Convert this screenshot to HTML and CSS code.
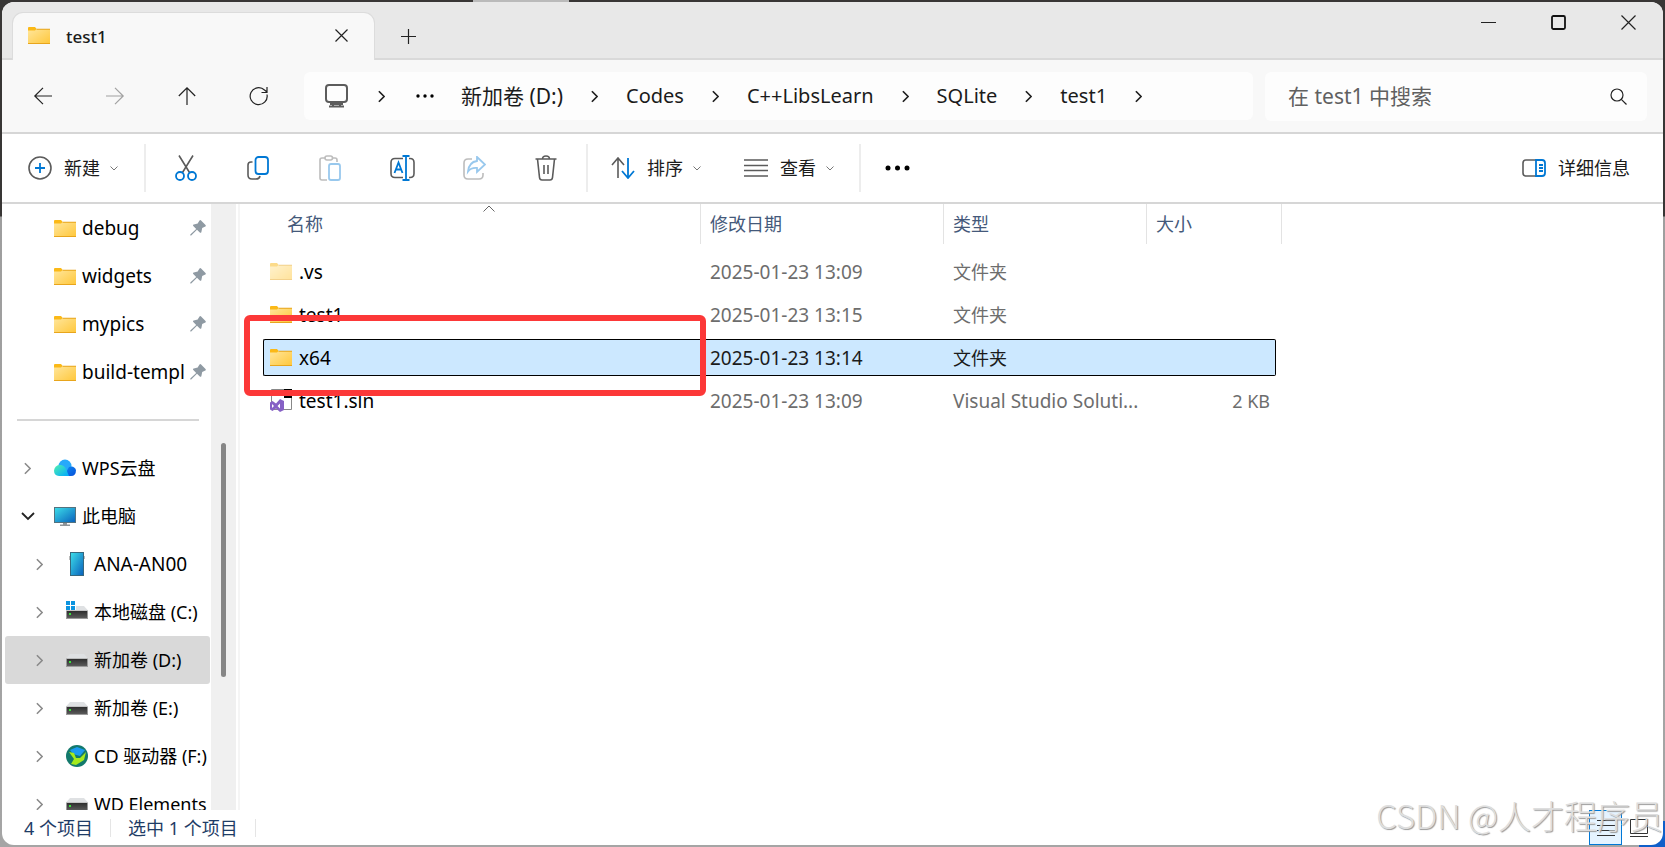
FILE: index.html
```html
<!DOCTYPE html>
<html lang="zh-CN">
<head>
<meta charset="utf-8">
<title>test1</title>
<link rel="stylesheet" href="styles.css">
</head>
<body>
<svg class="defs" aria-hidden="true">
  <defs>
    <linearGradient id="gold" x1="0" y1="0" x2="1" y2="1"><stop offset="0" stop-color="#ffe69c"/><stop offset="1" stop-color="#ffc73a"/></linearGradient>
    <linearGradient id="screen" x1="0" y1="0" x2="1" y2="1"><stop offset="0" stop-color="#3bdbe8"/><stop offset="1" stop-color="#0a63bd"/></linearGradient>
    <linearGradient id="cloudA" x1="0" y1="0" x2="1" y2="1"><stop offset="0" stop-color="#4ff0b0"/><stop offset="1" stop-color="#00a8ff"/></linearGradient>
    <linearGradient id="cloudB" x1="0" y1="0" x2="1" y2="1"><stop offset="0" stop-color="#0a8bf5"/><stop offset="1" stop-color="#0a50d8"/></linearGradient>
    <linearGradient id="drivebody" x1="0" y1="0" x2="0" y2="1"><stop offset="0" stop-color="#2e2e2e"/><stop offset="1" stop-color="#5a5a5a"/></linearGradient>
    <symbol id="folder" viewBox="0 0 22 17"><path fill="#fbb917" d="M0 1q0-1 1-1h6l1.500 1.700L8 4H0z"/><path fill="url(#gold)" d="M0 3.500h7L8.500 2H22v15H0z"/><path fill="#e8a51c" d="M8.500 1.700H22v1H8.500zM0 16h22v1H0z"/></symbol>
    <symbol id="drive" viewBox="0 0 22 13"><path fill="#dfe1e3" d="M4 0h14l4 4.500H0z"/><path fill="#9a9a9a" d="M0 4.500h22V13H0z"/><path fill="url(#drivebody)" d="M1 5h20v7H1z"/><path fill="#37e23a" d="M3 7h2v2H3z"/></symbol>
    <symbol id="pin" viewBox="0 0 16 16"><path fill="#8f9aa3" d="M9.500.5q.8-.8 1.600 0l4.400 4.400q.8.9-.2 1.500l-3.100 1.500-.8 4q-.5 1.500-1.600.5L7 9.700 1.200 15.500H.3v-1L6.200 8.900 3.300 6q-.9-1 .5-1.500l3.900-.9z"/></symbol>
    <symbol id="right" viewBox="0 0 8 14"><path d="M1 1l6 6-6 6"/></symbol>
    <symbol id="down" viewBox="0 0 8 5"><path d="M.5.500l3.500 3.500L7.500.5"/></symbol>
  </defs>
</svg>
<div class="window">
  <header class="titlebar">
    <div class="tab">
      <svg class="folder"><use href="#folder"/></svg>
      <span class="tab-name">test1</span>
      <button class="plain" aria-label="关闭标签页"><svg class="ln" width="13" height="13" viewBox="0 0 13 13"><path d="M.5.500l12 12M12.500.5l-12 12"/></svg></button>
    </div>
    <button class="plain new-tab" aria-label="新建标签页"><svg class="ln" width="15" height="15" viewBox="0 0 15 15"><path d="M7.500 0v15M0 7.500h15"/></svg></button>
    <div class="caption">
      <button class="plain" aria-label="最小化"><svg class="ln" width="15" height="15" viewBox="0 0 15 15"><path d="M0 7.500h15"/></svg></button>
      <button class="plain" aria-label="最大化"><svg class="ln heavy" width="15" height="15" viewBox="0 0 15 15"><rect x="1" y="1" width="13" height="13" rx="1.500"/></svg></button>
      <button class="plain" aria-label="关闭"><svg class="ln" width="15" height="15" viewBox="0 0 15 15"><path d="M.5.500l14 14M14.500.5l-14 14"/></svg></button>
    </div>
  </header>

  <nav class="navbar">
    <div class="nav-buttons">
      <button class="plain" aria-label="后退"><svg class="ln" width="18" height="18" viewBox="0 0 18 18"><path d="M18 9H1M9 .8L.8 9 9 17.200"/></svg></button>
      <button class="plain" aria-label="前进" disabled><svg class="ln" width="18" height="18" viewBox="0 0 18 18"><path d="M0 9h17M9 .8L17.200 9 9 17.200"/></svg></button>
      <button class="plain" aria-label="向上"><svg class="ln" width="18" height="18" viewBox="0 0 18 18"><path d="M9 18V1M.8 9L9 .8 17.200 9"/></svg></button>
      <button class="plain" aria-label="刷新"><svg class="ln" width="20" height="20" viewBox="0 0 20 20"><path d="M18 8.500A8.500 8.500 0 1 1 15.500 4L18 6M18 1v5.500h-5.500"/></svg></button>
    </div>
    <div class="address">
      <svg class="pc" width="23" height="24" viewBox="0 0 23 24"><rect x="1" y="1" width="21" height="17" rx="3"/><path d="M8 18v4M15 18v4M4 22.500h15M5 20h13"/></svg>
      <svg class="ln sep"><use href="#right"/></svg>
      <button class="plain" aria-label="更多路径"><svg width="18" height="4" viewBox="0 0 18 4"><circle cx="2" cy="2" r="1.700"/><circle cx="9" cy="2" r="1.700"/><circle cx="16" cy="2" r="1.700"/></svg></button>
      <a class="crumb cjk" href="#d">新加卷 (D:)</a><svg class="ln sep"><use href="#right"/></svg>
      <a class="crumb" href="#codes">Codes</a><svg class="ln sep"><use href="#right"/></svg>
      <a class="crumb" href="#libs">C++LibsLearn</a><svg class="ln sep"><use href="#right"/></svg>
      <a class="crumb" href="#sqlite">SQLite</a><svg class="ln sep"><use href="#right"/></svg>
      <a class="crumb" href="#test1">test1</a><svg class="ln sep"><use href="#right"/></svg>
    </div>
    <div class="search">
      <input type="text" aria-label="搜索" placeholder="在 test1 中搜索">
      <svg class="ln" width="17" height="17" viewBox="0 0 17 17"><circle cx="7" cy="7" r="6"/><path d="M11.300 11.300L16.500 16.500"/></svg>
    </div>
  </nav>

  <div class="toolbar">
    <button class="cmd cmd-new"><svg class="ic" width="24" height="24" viewBox="0 0 24 24"><circle cx="12" cy="12" r="11"/><path class="blue" d="M12 7v10M7 12h10"/></svg><span>新建</span><svg class="ln caret"><use href="#down"/></svg></button>
    <span class="rule"></span>
    <div class="icons">
      <button class="plain" aria-label="剪切"><svg class="ic" width="22" height="26" viewBox="0 0 22 26"><path d="M4 .5l10.500 17M18 .5L7.500 17.500"/><circle class="blue" cx="5" cy="21" r="4"/><circle class="blue" cx="17" cy="21" r="4"/></svg></button>
      <button class="plain" aria-label="复制"><svg class="ic" width="22" height="24" viewBox="0 0 22 24"><path d="M5.500 6H4Q1 6 1 9v10q0 4 4 4h4q3.500 0 4-3"/><rect class="blue" x="8.500" y="1" width="12.500" height="17" rx="3"/></svg></button>
      <button class="plain" aria-label="粘贴" disabled><svg class="ic" width="22" height="26" viewBox="0 0 22 26"><path d="M8 25H3q-2 0-2-2V5q0-2 2-2h3M13 3h3q2 0 2 2v2"/><rect x="6" y="1" width="7.500" height="4" rx="2"/><rect class="blue" x="10" y="9" width="11" height="16" rx="2"/></svg></button>
      <button class="plain" aria-label="重命名"><svg class="ic" width="25" height="26" viewBox="0 0 25 26"><path d="M13 22.500H5q-4 0-4-4v-11q0-4 4-4h8M19 3.500h1q4 0 4 4v11q0 4-4 4h-1"/><path class="blue" d="M16 1v24M12.500 1h7M12.500 25h7M4.500 18L8.500 7.500 12.500 18M6 14.500h5"/></svg></button>
      <button class="plain" aria-label="共享" disabled><svg class="ic" width="23" height="24" viewBox="0 0 23 24"><path d="M9 3H5Q1 3 1 7v12q0 4 4 4h11q4 0 4-4v-2"/><path class="blue" d="M14 1l8 7.500-8 7.500v-4q-6-.5-9 3.500 1-9.500 9-10.500z"/></svg></button>
      <button class="plain" aria-label="删除"><svg class="ic" width="22" height="26" viewBox="0 0 22 26"><path d="M.5 4h21M7.500 4q0-3 3.500-3t3.500 3M2.500 4L4.500 22.500q.3 2.500 2.500 2.500h8q2.200 0 2.500-2.500L19.500 4M9 10v9M13 10v9"/></svg></button>
    </div>
    <span class="rule"></span>
    <button class="cmd cmd-sort"><svg class="ic" width="24" height="22" viewBox="0 0 24 22"><path d="M7 21V1M1 8l6-7 6 7"/><path class="blue" d="M17 1v20M11 14l6 7 6-7"/></svg><span>排序</span><svg class="ln caret"><use href="#down"/></svg></button>
    <button class="cmd cmd-view"><svg class="ic" width="24" height="18" viewBox="0 0 24 18"><path d="M0 1h24M0 6.500h24M0 11.500h24M0 17h24"/></svg><span>查看</span><svg class="ln caret"><use href="#down"/></svg></button>
    <span class="rule"></span>
    <button class="plain more" aria-label="查看更多"><svg width="25" height="6" viewBox="0 0 25 6"><circle cx="3" cy="3" r="2.500"/><circle cx="12.500" cy="3" r="2.500"/><circle cx="22" cy="3" r="2.500"/></svg></button>
    <button class="cmd details"><svg class="ic" width="24" height="18" viewBox="0 0 24 18"><path d="M14 1H4Q1 1 1 4v10q0 3 3 3h10"/><path class="blue" d="M14 1h6q3 0 3 3v10q0 3-3 3h-6zM17 6h4M17 9h4M17 12h4"/></svg><span>详细信息</span></button>
  </div>

  <main class="content">
    <aside class="sidebar">
      <ul class="tree">
        <li class="node pinned"><svg class="folder"><use href="#folder"/></svg><span class="latin">debug</span><svg class="pin"><use href="#pin"/></svg></li>
        <li class="node pinned"><svg class="folder"><use href="#folder"/></svg><span class="latin">widgets</span><svg class="pin"><use href="#pin"/></svg></li>
        <li class="node pinned"><svg class="folder"><use href="#folder"/></svg><span class="latin">mypics</span><svg class="pin"><use href="#pin"/></svg></li>
        <li class="node pinned"><svg class="folder"><use href="#folder"/></svg><span class="latin">build-templ</span><svg class="pin"><use href="#pin"/></svg></li>
        <li class="divider"></li>
        <li class="node"><svg class="ln arrow"><use href="#right"/></svg><svg class="glyph" viewBox="0 0 22 22"><circle cx="11" cy="9" r="6.500" fill="#27a9fb"/><path fill="url(#cloudB)" d="M10 19l5-9q5-2 7 3 0 6-5 6z"/><path fill="url(#cloudA)" d="M5 19q-5-.5-5-5.500Q1 8 6 8q4 0 6 4l3 7z"/></svg><span>WPS云盘</span></li>
        <li class="node open"><svg class="ln arrow-down" width="14" height="8" viewBox="0 0 14 8"><path d="M1 1l6 6 6-6"/></svg><svg class="glyph" viewBox="0 0 22 22"><path fill="#53727f" d="M0 2h22v16H0z"/><path fill="url(#screen)" d="M1 3h20v14H1z"/><path fill="#8f9599" d="M9 18h4v1.500h3V21H6v-1.500h3z"/></svg><span>此电脑</span></li>
        <li class="node deep"><svg class="ln arrow"><use href="#right"/></svg><svg class="glyph" viewBox="0 0 22 24"><path fill="#bbb" d="M3 4h1v4H3zM18 4h1v3h-1z"/><path fill="#36687e" d="M4 0h14v24H4z"/><path fill="url(#screen)" d="M5 1h12v22H5z"/></svg><span class="latin">ANA-AN00</span></li>
        <li class="node deep"><svg class="ln arrow"><use href="#right"/></svg><svg class="glyph" viewBox="0 0 22 22"><use href="#drive" y="5" width="22" height="13"/><path fill="#fff" d="M0 0h10v9H0z"/><path fill="#0d94df" d="M0 0h4v4H0zM5 0h4v4H5zM0 5h4v4H0zM5 5h4v4H5z"/></svg><span>本地磁盘 (C:)</span></li>
        <li class="node deep selected"><svg class="ln arrow"><use href="#right"/></svg><svg class="glyph" viewBox="0 0 22 22"><use href="#drive" y="5" width="22" height="13"/></svg><span>新加卷 (D:)</span></li>
        <li class="node deep"><svg class="ln arrow"><use href="#right"/></svg><svg class="glyph" viewBox="0 0 22 22"><use href="#drive" y="5" width="22" height="13"/></svg><span>新加卷 (E:)</span></li>
        <li class="node deep"><svg class="ln arrow"><use href="#right"/></svg><svg class="glyph" viewBox="0 0 22 22"><circle cx="11" cy="11" r="11" fill="#13796c"/><path fill="#1b9af0" d="M4 5l7-3 8 3-5 6-7-2z"/><path fill="#a4ea1c" d="M3 7l5 1 2 5 4 0 6-6-2 8-8 5-5-1 3-5z"/></svg><span>CD 驱动器 (F:)</span></li>
        <li class="node deep"><svg class="ln arrow"><use href="#right"/></svg><svg class="glyph" viewBox="0 0 22 22"><use href="#drive" y="5" width="22" height="13"/></svg><span>WD Elements</span></li>
      </ul>
      <div class="scroll"><div class="thumb"></div></div>
    </aside>
    <section class="files">
      <table>
        <colgroup><col class="c-name"><col class="c-date"><col class="c-type"><col class="c-size"></colgroup>
        <thead><tr><th class="h-name">名称<svg class="ln sorted" width="12" height="7" viewBox="0 0 12 7"><path d="M.5 6.500L6 1l5.500 5.500"/></svg></th><th>修改日期</th><th>类型</th><th>大小</th></tr></thead>
        <tbody>
          <tr><td><div class="cell first latin"><svg class="folder dim"><use href="#folder"/></svg>.vs</div></td><td><div class="cell latin">2025-01-23 13:09</div></td><td><div class="cell">文件夹</div></td><td><div class="cell last"></div></td></tr>
          <tr><td><div class="cell first latin"><svg class="folder"><use href="#folder"/></svg>test1</div></td><td><div class="cell latin">2025-01-23 13:15</div></td><td><div class="cell">文件夹</div></td><td><div class="cell last"></div></td></tr>
          <tr class="picked"><td><div class="cell first latin"><svg class="folder"><use href="#folder"/></svg>x64</div></td><td><div class="cell latin">2025-01-23 13:14</div></td><td><div class="cell">文件夹</div></td><td><div class="cell last"></div></td></tr>
          <tr><td><div class="cell first latin"><svg class="sln" width="22" height="23" viewBox="0 0 22 23"><path fill="#fff" stroke="#888" d="M1.500.5h20v20h-20z"/><path d="M14 0h8v9h-8z"/><path fill="#8661c5" fill-rule="evenodd" d="M10 10l4 2v9l-4 2-4-3.500L2.500 22 0 20.500v-7L2.500 12 6 14.500zM2 15v4l2-2zm8-.5L7.500 17l2.500 2.500z"/></svg>test1.sln</div></td><td><div class="cell latin">2025-01-23 13:09</div></td><td><div class="cell latin">Visual Studio Soluti...</div></td><td><div class="cell last">2 KB</div></td></tr>
        </tbody>
      </table>
      <div class="marker"></div>
    </section>
  </main>

  <footer class="status">
    <span>4 个项目</span><span class="bar"></span><span>选中 1 个项目</span><span class="bar"></span>
    <div class="views">
      <button class="view on" aria-label="详细信息视图"><svg width="18" height="17" viewBox="0 0 18 17"><path d="M0 1.500h18M0 6.500h18M0 11.500h18M0 16.500h18"/></svg></button>
      <button class="view" aria-label="大图标视图"><svg width="18" height="18" viewBox="0 0 18 18"><path d="M.5.500h17v14H.5zM0 17.500h18"/></svg></button>
    </div>
  </footer>
  <div class="watermark">CSDN @人才程序员</div>
</div>
</body>
</html>
```
FILE: styles.css
```css
* { box-sizing: border-box; }
body {
  margin: 0;
  min-height: 100vh;
  padding: 2px;
  display: flex;
  background:
    linear-gradient(#bababa, #bababa) 473px 0 / 96px 2px no-repeat,
    linear-gradient(#0f5fc9, #0f5fc9) 100% 100% / 26px 26px no-repeat,
    linear-gradient(#383635 0, #383635 216px, #9e9e9e 217px, #a5a5a5 100%);
  font-family: "Noto Sans", "Noto Sans CJK SC", sans-serif;
  font-size: 18px;
  line-height: 24px;
  color: #1b1b1b;
}
.defs { position: absolute; width: 0; height: 0; }
svg { flex: none; display: block; }
button { font: inherit; color: inherit; border: 0; padding: 0; background: none; }
.plain { display: flex; align-items: center; justify-content: center; }
.ln { fill: none; stroke: #222; stroke-width: 1.2; overflow: visible; }
.heavy { stroke: #111; stroke-width: 1.8; }
.folder { width: 22px; height: 17px; }
.latin { font-size: 19px; }

.window {
  position: relative;
  flex: 1;
  min-width: 0;
  display: flex;
  flex-direction: column;
  height: calc(100vh - 4px);
  border-radius: 12px;
  background: #fff;
  overflow: hidden;
}

/* title bar */
.titlebar { display: flex; height: 58px; padding-left: 11px; background: #e8e8e8; box-shadow: inset 0 -2px #d9d9d9; }
.tab {
  display: flex;
  align-items: center;
  width: 361px;
  margin-top: 11px;
  padding: 0 26px 2px 15px;
  background: #f8f8f8;
  border-radius: 10px 10px 0 0;
  box-shadow: 0 0 0 1px #dcdcdc;
  clip-path: inset(-2px -2px 0 -2px);
}
.tab-name { flex: 1; padding: 2px 0 0 16px; font-size: 17px; font-weight: 500; }
.new-tab { width: 69px; padding-top: 11px; }
.caption { margin-left: auto; display: flex; height: 41px; }
.caption .plain { width: 70px; }

/* navigation */
.navbar { display: flex; align-items: center; height: 74px; padding: 0 16px 0 5px; background: #f8f8f8; border-bottom: 2px solid #d6d6d6; }
.nav-buttons { display: flex; flex: none; width: 297px; }
.nav-buttons .plain { width: 72px; height: 40px; }
.plain:disabled { opacity: .4; }
.address { display: flex; flex: 1; align-items: center; height: 48px; padding-left: 21px; border-radius: 6px; background: #fdfdfd; }
.pc { fill: none; stroke: #5c5c5c; stroke-width: 2; margin-right: 30px; }
.sep { width: 7px; height: 13px; stroke-width: 2; }
.address .plain { width: 48px; margin: 0 12px 0 16px; }
.crumb { font-size: 20px; color: #1b1b1b; text-decoration: none; white-space: nowrap; margin-right: 28px; }
.sep + .crumb { margin-left: 28px; }
.cjk { font-size: 21px; }
.search { display: flex; align-items: center; flex: none; width: 382px; height: 49px; margin-left: 12px; padding: 0 20px 0 23px; border-radius: 6px; background: #fdfdfd; }
.search input { flex: 1; min-width: 0; border: 0; padding: 0; outline: 0; background: none; font: inherit; font-size: 21px; }
.search input::placeholder { color: #606060; opacity: 1; }

/* command bar */
.toolbar { display: flex; align-items: center; height: 70px; padding: 0 33px 0 26px; border-bottom: 2px solid #d6d6d6; }
.cmd { display: flex; align-items: center; gap: 12px; flex: none; }
.caret { width: 8px; height: 5px; margin-left: -2px; stroke: #777; stroke-width: 1; }
.ic { fill: none; stroke: #5b5b5b; stroke-width: 1.6; }
.ic .blue { stroke: #0078d4; stroke-width: 1.8; }
.rule { width: 2px; height: 48px; background: #ededed; flex: none; }
.cmd-new { margin-right: 26px; }
.icons { display: flex; padding: 0 4px; }
.icons .plain { width: 72px; height: 40px; }
.cmd-sort { margin: 0 43px 0 23px; }
.cmd-view { margin-right: 25px; }
.more { margin-left: 24px; }
.details { margin-left: auto; }

/* body */
.content { flex: 1; display: flex; min-height: 0; }
.sidebar { display: flex; flex: none; width: 238px; border-right: 2px solid #f5f5f5; }
.tree { list-style: none; flex: none; width: 209px; margin: 0; padding: 0 0 0 3px; overflow: hidden; }
.node { display: flex; align-items: center; height: 48px; padding-left: 16px; color: #000; white-space: nowrap; border-radius: 3px; }
.node .glyph { width: 22px; height: 24px; margin-right: 6px; }
.node .folder { margin-right: 6px; }
.arrow { width: 7px; height: 13px; margin: 0 23px 0 3px; stroke: #8a8a8a; stroke-width: 1.8; }
.arrow-down { margin-right: 19px; stroke-width: 1.8; }
.pinned { padding: 0 5px 0 49px; }
.pinned .pin { width: 16px; height: 16px; margin-left: auto; }
.deep { padding-left: 28px; }
.selected { background: #d9d9d9; margin-right: 1px; }
.divider { height: 48px; margin: 0 12px; background: linear-gradient(#d6d6d6, #d6d6d6) 0 50% / 100% 2px no-repeat; }
.scroll { flex: none; width: 25px; background: #f0f0f0; padding: 239px 10px 0; }
.thumb { height: 234px; width: 5px; border-radius: 3px; background: #868686; }

.files { position: relative; flex: 1; min-width: 0; padding-left: 23px; }
table { border-collapse: separate; border-spacing: 0; table-layout: fixed; width: 1019px; }
.c-name { width: 438px; }
.c-date { width: 243px; }
.c-type { width: 203px; }
.c-size { width: 135px; }
th { position: relative; height: 40px; padding: 0 0 0 9px; border-right: 1px solid #e3e3e3; font-weight: 400; text-align: left; color: #44597a; }
.h-name { padding-left: 24px; }
.sorted { position: absolute; top: 1px; left: 50%; margin-left: 1px; stroke: #666; stroke-width: 1; }
thead::after { content: ""; display: block; height: 6px; }
td { padding: 3px 0; color: #6d6d6d; }
.cell { display: flex; align-items: center; height: 37px; padding-left: 9px; white-space: nowrap; }
.first { gap: 7px; padding-left: 7px; color: #000; }
.last { justify-content: flex-end; margin-right: 6px; padding-right: 6px; }
.dim { opacity: .5; }
.picked .cell { background: #cce8ff; border: solid #000; border-width: 1px 0; color: #1b1b1b; }
.picked .first { border-left-width: 1px; padding-left: 6px; border-radius: 2px 0 0 2px; color: #000; }
.picked .last { border-right-width: 1px; border-radius: 0 2px 2px 0; }
.marker { position: absolute; left: 4px; top: 111px; width: 462px; height: 81px; border: 6px solid #fc3838; border-radius: 6px; }

/* status bar */
.status { display: flex; align-items: center; height: 35px; padding: 0 0 0 22px; color: #1e3c66; }
.bar { width: 1px; height: 18px; margin: 0 17px; background: #e5e5e5; }
.views { display: flex; margin-left: auto; padding-right: 8px; align-self: stretch; }
.view { display: grid; place-items: center; width: 33px; height: 35px; }
.view svg { fill: none; stroke: #333; }
.on { background: #e5f3ff; border: 1px solid #0078d7; }
.watermark { position: absolute; right: 0; bottom: 8px; font: 300 33px/44px "Noto Sans CJK SC", sans-serif; color: #dedede; text-shadow: 1px 1px 1px #999; white-space: nowrap; pointer-events: none; }
```
